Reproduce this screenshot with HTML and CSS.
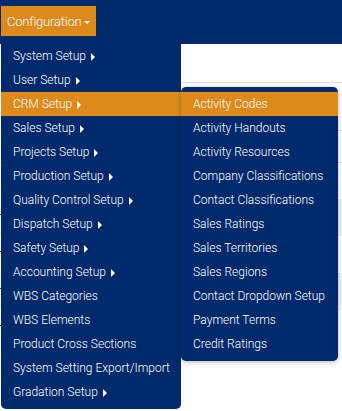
FILE: index.html
```html
<!DOCTYPE html>
<html lang="en">
<head>
  <meta charset="UTF-8">
  <title>Configuration</title>
  <link rel="stylesheet" href="styles.css">
</head>
<body>
  <nav class="navbar">
    <button class="nav-btn">Configuration <span class="caret-down"></span></button>
  </nav>

  <!-- Page content behind the menu -->
  <div class="page">
    <div class="page-header"></div>
    <div class="toolbar"></div>
    <div class="rows">
      <div class="row"></div>
      <div class="row"></div>
      <div class="row"></div>
      <div class="row"></div>
    </div>
  </div>

  <!-- Configuration dropdown -->
  <ul class="menu">
    <li><a>System Setup <span class="caret"></span></a></li>
    <li><a>User Setup <span class="caret"></span></a></li>
    <li class="open">
      <a class="active">CRM Setup <span class="caret"></span></a>
      <ul class="submenu">
        <li><a class="active">Activity Codes</a></li>
        <li><a>Activity Handouts</a></li>
        <li><a>Activity Resources</a></li>
        <li><a>Company Classifications</a></li>
        <li><a>Contact Classifications</a></li>
        <li><a>Sales Ratings</a></li>
        <li><a>Sales Territories</a></li>
        <li><a>Sales Regions</a></li>
        <li><a>Contact Dropdown Setup</a></li>
        <li><a>Payment Terms</a></li>
        <li><a>Credit Ratings</a></li>
      </ul>
    </li>
    <li><a>Sales Setup <span class="caret"></span></a></li>
    <li><a>Projects Setup <span class="caret"></span></a></li>
    <li><a>Production Setup <span class="caret"></span></a></li>
    <li><a>Quality Control Setup <span class="caret"></span></a></li>
    <li><a>Dispatch Setup <span class="caret"></span></a></li>
    <li><a>Safety Setup <span class="caret"></span></a></li>
    <li><a>Accounting Setup <span class="caret"></span></a></li>
    <li><a>WBS Categories</a></li>
    <li><a>WBS Elements</a></li>
    <li><a>Product Cross Sections</a></li>
    <li><a>System Setting Export/Import</a></li>
    <li><a>Gradation Setup <span class="caret"></span></a></li>
  </ul>
</body>
</html>
```

FILE: styles.css
```css
body {
  margin: 0;
  background-color: #fff;
  font-family: Roboto, 'Noto Sans', sans-serif;
  font-size: 12px;
  font-weight: 300;
  color: #fff;
}

.navbar {
  background-color: #002a6c;
  height: 44px;
  padding: 6px 1px;
  box-sizing: border-box;
}

.nav-btn {
  background-color: #dc8a1c;
  color: #fff;
  border: none;
  font-family: inherit;
  font-weight: 300;
  font-size: 13px;
  letter-spacing: -0.2px;
  height: 30px;
  width: 95px;
  padding: 0 0 0 6px;
  text-align: left;
  white-space: nowrap;
}

.caret-down {
  display: inline-block;
  width: 0;
  height: 0;
  border-left: 3px solid transparent;
  border-right: 3px solid transparent;
  border-top: 3px solid #fff;
  vertical-align: middle;
}

/* background page */
.page-header {
  height: 38px;
  border-bottom: 1px solid #dcdde2;
}

.toolbar {
  margin-top: 47px;
  height: 31px;
  border-top: 1px solid #e4e4e4;
  border-bottom: 1px solid #e4e4e4;
}

.rows {
  margin-top: 36px;
}

.row {
  height: 37px;
}

.row:nth-child(odd) {
  background-color: #f2f2f2;
}

.row::before {
  content: '';
  display: block;
  width: 1px;
  height: 15px;
  border-bottom: 1px solid #444;
}

/* Dropdown menus */
.menu, .submenu {
  list-style: none;
  margin: 0;
  padding: 0;
  background-color: #002a6c;
}

.menu {
  position: absolute;
  top: 44px;
  left: 1px;
  width: 180px;
  padding-bottom: 5px;
  border-radius: 0 0 5px 5px;
}

.menu li {
  position: relative;
}

.menu a {
  display: block;
  height: 24px;
  line-height: 24px;
  padding: 0 12px;
  white-space: nowrap;
}

.menu a.active {
  background-color: #dc8a1c;
}

.caret {
  display: inline-block;
  width: 0;
  height: 0;
  border-top: 4px solid transparent;
  border-bottom: 4px solid transparent;
  border-left: 4px solid #fff;
  margin-left: 2px;
  vertical-align: -1px;
}

.submenu {
  position: absolute;
  top: -5px;
  left: 180px;
  width: 157px;
  padding: 5px 0;
  border-radius: 5px;
  box-shadow: 0 1px 4px rgba(0, 0, 0, 0.3);
}
```
